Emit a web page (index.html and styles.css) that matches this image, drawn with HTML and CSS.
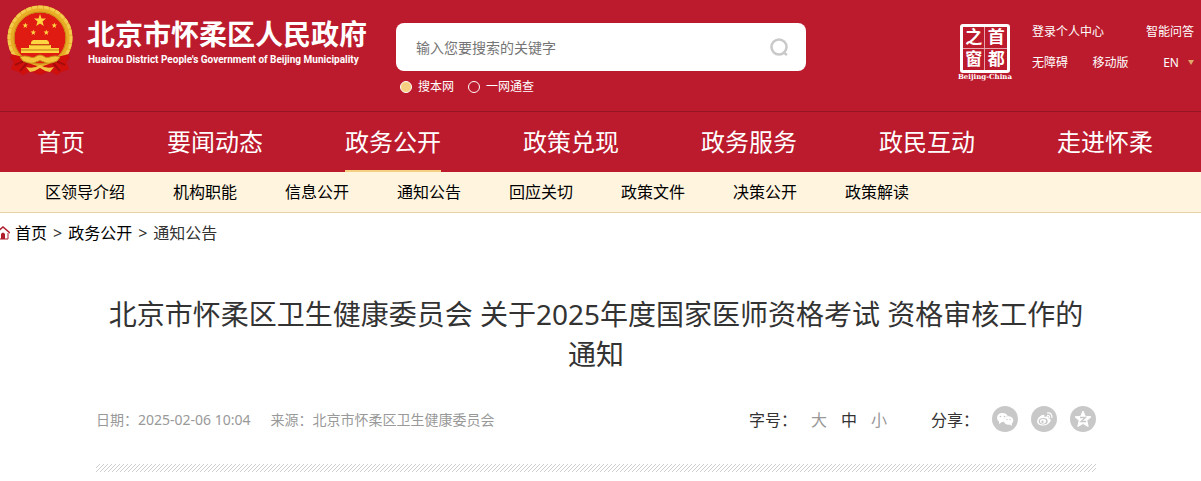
FILE: index.html
```html
<!DOCTYPE html>
<html lang="zh-CN">
<head>
  <meta charset="UTF-8">
  <meta name="viewport" content="width=device-width, initial-scale=1.0">
  <title>通知公告 - 北京市怀柔区人民政府</title>
  <link rel="stylesheet" href="styles.css">
</head>
<body>

  <!-- Header -->
  <header class="header">
    <a href="#" class="brand">
      <svg class="emblem" viewBox="0 0 68 72" aria-hidden="true">
        <path d="M10 46 L4 54 L8 58 L5 65 L13 68 L17 71 L24 67 L34 71 L44 67 L51 71 L55 68 L63 65 L60 58 L64 54 L58 46Z" fill="#c90d0d"/>
        <circle cx="34" cy="34" r="29" fill="#e01b12" stroke="#e8ad25" stroke-width="7"/>
        <circle cx="34" cy="34" r="31" fill="none" stroke="#f3cb4d" stroke-width="3" stroke-dasharray="5 1"/>
        <circle cx="34" cy="34" r="26" fill="none" stroke="#c98516" stroke-width="1"/>
        <path d="M5 50 L17 53 L25 60 L34 63 L43 60 L51 53 L63 50 L60 58 L63 65 L55 68 L51 71 L44 67 L34 70 L24 67 L17 71 L13 68 L5 65 L8 58Z" fill="#cf100d"/>
        <path d="M9 61 L18 57 M14 67 L21 59 M59 61 L50 57 M54 67 L47 59" stroke="#a50c0c" stroke-width="2"/>
        <g fill="#ffd542">
          <path id="star" d="M34 10 L35.500 14.500 L40 14.600 L36.500 17.500 L37.800 22 L34 19.500 L30.200 22 L31.500 17.500 L28 14.600 L32.500 14.500Z"/>
          <use href="#star" transform="translate(4 14) scale(.45)"/>
          <use href="#star" transform="translate(12 21) scale(.45)"/>
          <use href="#star" transform="translate(25 21) scale(.45)"/>
          <use href="#star" transform="translate(33 14) scale(.45)"/>
          <path d="M25 38 L27 36 H41 L43 38 V40 H25Z"/>
          <path d="M23 41 H45 V44 H53 V49 H15 V44 H23Z"/>
        </g>
        <path d="M15 46 H53 M24 41 H44" stroke="#bd7914"/>
        <path d="M14 53 C21 50 25 55 29 53 Q34 49 39 53 C43 55 47 50 54 53 L51 57 Q42 61 38 58 Q34 55 30 58 Q26 61 17 57Z" fill="#f4c33b" stroke="#c78b1b"/>
        <path d="M20 63 Q28 65 34 61 Q40 65 48 63 L44 68 Q38 67 34 64 Q30 67 24 68Z" fill="#f2c344"/>
      </svg>
      <span class="brand-text">
        <strong class="brand-name">北京市怀柔区人民政府</strong>
        <span class="brand-en">Huairou District People's Government of Beijing Municipality</span>
      </span>
    </a>

    <form class="search">
      <div class="search-box">
        <input type="text" class="search-input" placeholder="输入您要搜索的关键字" aria-label="搜索">
        <button type="submit" class="search-btn" aria-label="搜索">
          <svg width="20" height="20" viewBox="0 0 20 20" fill="none" stroke="#c9c9c9" stroke-width="2.500">
            <circle cx="9" cy="10" r="7.500"/>
            <path d="M13 15 L17 18"/>
          </svg>
        </button>
      </div>
      <div class="search-scope">
        <label><input type="radio" name="scope" checked>搜本网</label>
        <label><input type="radio" name="scope">一网通查</label>
      </div>
    </form>

    <div class="tools">
      <a href="#" class="capital">
        <span class="capital-seal"><b>之</b><b>首</b><b>窗</b><b>都</b></span>
        <span class="capital-en">Beijing-China</span>
      </a>
      <div class="tool-links">
        <div class="tool-row">
          <a href="#">登录个人中心</a>
          <a href="#">智能问答</a>
        </div>
        <div class="tool-row">
          <a href="#">无障碍</a>
          <a href="#">移动版</a>
          <a href="#" class="lang">EN</a>
        </div>
      </div>
    </div>
  </header>

  <!-- Navigation -->
  <nav class="nav">
    <a href="#">首页</a>
    <a href="#">要闻动态</a>
    <a href="#" class="active">政务公开</a>
    <a href="#">政策兑现</a>
    <a href="#">政务服务</a>
    <a href="#">政民互动</a>
    <a href="#">走进怀柔</a>
  </nav>
  <nav class="subnav">
    <a href="#">区领导介绍</a>
    <a href="#">机构职能</a>
    <a href="#">信息公开</a>
    <a href="#">通知公告</a>
    <a href="#">回应关切</a>
    <a href="#">政策文件</a>
    <a href="#">决策公开</a>
    <a href="#">政策解读</a>
  </nav>

  <div class="crumbs">
    <svg width="10" height="14" viewBox="0 0 10 14" aria-hidden="true">
      <path d="M-4 7 L3 1 L10 7" fill="none" stroke="#b01c2c" stroke-width="1.500"/>
      <path d="M-2 7 V13 H8 V7" fill="none" stroke="#b01c2c"/>
      <path d="M1 13 V8 Q3 5 5 8 V13Z" fill="#b01c2c"/>
    </svg>
    <a href="#">首页</a>
    <span>&gt;</span>
    <a href="#">政务公开</a>
    <span>&gt;</span>
    <span>通知公告</span>
  </div>

  <!-- Article -->
  <main class="page">
    <article class="article">
      <h1>北京市怀柔区卫生健康委员会 关于2025年度国家医师资格考试 资格审核工作的通知</h1>
      <div class="meta">
        <div class="source">
          <span>日期：2025-02-06 10:04</span>
          <span>来源：北京市怀柔区卫生健康委员会</span>
        </div>
        <div class="font-size">
          <span class="meta-label">字号：</span>
          <button type="button">大</button>
          <button type="button" class="current">中</button>
          <button type="button">小</button>
        </div>
        <div class="share">
          <span class="meta-label">分享：</span>
          <a href="#" aria-label="微信">
            <svg viewBox="0 0 26 26" width="26" height="26">
              <circle cx="13" cy="13" r="13" fill="#c8c8c8"/>
              <path d="M10.500 7 C4 7 4 14 7 15.500 L7 18 L10 16 H12 C11 11 15 10 16 10.500 C15 8 13 7 10.500 7Z" fill="#fff"/>
              <ellipse cx="16.500" cy="14.500" rx="4.800" ry="4.200" fill="#fff"/>
              <path d="M17 18 L20 20 L19.500 17Z" fill="#fff"/>
              <g fill="#c8c8c8"><circle cx="8.500" cy="10.500" r=".8"/><circle cx="12.500" cy="10.500" r=".8"/><circle cx="15" cy="13.500" r=".7"/><circle cx="18" cy="13.500" r=".7"/></g>
            </svg>
          </a>
          <a href="#" aria-label="微博">
            <svg viewBox="0 0 26 26" width="26" height="26">
              <circle cx="13" cy="13" r="13" fill="#c8c8c8"/>
              <path d="M6 15 Q7 11 11 9 Q14 8 13.500 11 Q18 9 17.500 12 Q21 13 19 16 Q16 20 11 19.500 Q6 19 6 15Z" fill="#fff"/>
              <ellipse cx="12.200" cy="15.300" rx="4.500" ry="3.200" fill="#c8c8c8"/>
              <ellipse cx="12" cy="15.300" rx="3" ry="2.400" fill="#fff"/>
              <circle cx="11.500" cy="15.800" r="1.200" fill="#c8c8c8"/>
              <path d="M16 7 Q21 6 21 12 M16 9.500 Q19 9 18.500 12" fill="none" stroke="#fff" stroke-width="1.200"/>
            </svg>
          </a>
          <a href="#" aria-label="QQ空间">
            <svg viewBox="0 0 26 26" width="26" height="26">
              <circle cx="13" cy="13" r="13" fill="#c8c8c8"/>
              <path d="M13 5 L15.300 10.300 L21 10.800 L16.800 14.600 L18.200 20.500 L13 17.500 L7.800 20.500 L9.200 14.600 L5 10.800 L10.700 10.300Z" fill="#fff" stroke="#fff" stroke-linejoin="round"/>
              <path d="M10 11.500 H15.500 L11 15.500 H16" fill="none" stroke="#c8c8c8" stroke-width="1.300"/>
            </svg>
          </a>
        </div>
      </div>
      <div class="divider"></div>
    </article>
  </main>

</body>
</html>
```
FILE: styles.css
```css
* {
  margin: 0;
  padding: 0;
  box-sizing: border-box;
}

body {
  font-family: "Noto Sans", "Noto Sans CJK SC", sans-serif;
  font-size: 16px;
  color: #333;
  background: #fff;
}

a {
  color: inherit;
  text-decoration: none;
}

button,
input {
  font: inherit;
  border: none;
  background: none;
}

button {
  cursor: pointer;
}

/* Header */
.header {
  display: flex;
  align-items: flex-start;
  min-height: 112px;
  padding: 4px 7px 0 6px;
  background: #bc1b2d;
  border-bottom: 1px solid #961524;
  color: #fff;
}

.brand {
  display: flex;
  gap: 13px;
}

.emblem {
  width: 68px;
  height: 72px;
}

.brand-text {
  display: flex;
  flex-direction: column;
  width: 280px;
  padding-top: 14px;
}

.brand-name {
  font-size: 28px;
  line-height: 32px;
}

.brand-en {
  font-family: Roboto, sans-serif;
  font-size: 10px;
  font-weight: 700;
  line-height: 20px;
  padding-left: 1px;
  white-space: nowrap;
}

.search {
  width: 410px;
  margin: 19px 0 0 29px;
}

.search-box {
  display: flex;
  align-items: center;
  height: 48px;
  padding: 0 16px 0 20px;
  background: #fff;
  border-radius: 8px;
}

.search-input {
  flex: 1;
  font-size: 14px;
  color: #333;
  outline: none;
}

.search-input::placeholder {
  color: #757575;
}

.search-btn svg {
  display: block;
}

.search-scope {
  display: flex;
  gap: 14px;
  padding: 6px 4px;
  font-size: 12px;
  line-height: 20px;
}

.search-scope label {
  display: flex;
  align-items: center;
  gap: 6px;
}

.search-scope input {
  appearance: none;
  width: 12px;
  height: 12px;
  border: 1px solid #fff;
  border-radius: 50%;
}

.search-scope input:checked {
  background: #f6cf80;
}

.tools {
  display: flex;
  gap: 20px;
  margin-left: auto;
}

.capital {
  display: flex;
  flex-direction: column;
  align-items: center;
  padding-top: 20px;
}

.capital-seal {
  display: grid;
  grid-template-columns: 1fr 1fr;
  gap: 1px;
  width: 50px;
  height: 49px;
  border: 3px solid #fff;
  border-radius: 3px;
  background: #e6a5ac;
}

.capital-seal b {
  background: #bc1b2d;
  font-family: "Liberation Serif", "Noto Sans CJK SC", serif;
  font-size: 17px;
  line-height: 21px;
  text-align: center;
}

.capital-en {
  font-family: "DejaVu Serif", serif;
  font-size: 7px;
  font-weight: bold;
  line-height: 8px;
}

.tool-links {
  width: 162px;
  padding-top: 12px;
  font-size: 12px;
}

.tool-row {
  display: flex;
  justify-content: space-between;
  line-height: 31px;
}

.lang {
  display: flex;
  align-items: center;
  gap: 9px;
  margin-left: 10px;
}

.lang::after {
  content: "";
  border: 3px solid transparent;
  border-top: 5px solid #e0a868;
  border-bottom: 0;
}

/* Navigation */
.nav {
  display: flex;
  justify-content: space-between;
  padding: 0 48px 0 37px;
  background: #bc1b2d;
  color: #fff;
  font-size: 24px;
  line-height: 56px;
}

.nav a {
  padding-top: 2px;
  border-bottom: 2px solid transparent;
}

.nav .active {
  border-color: #f6cf80;
}

.subnav {
  display: flex;
  gap: 48px;
  padding: 0 45px;
  background: #fff5df;
  border-bottom: 1px solid #e6d3a3;
  color: #000;
  line-height: 40px;
}

.crumbs {
  display: flex;
  align-items: center;
  gap: 6px;
  line-height: 40px;
}

.crumbs svg {
  margin-right: -1px;
}

.crumbs a {
  color: #000;
}

/* Article */
.page {
  padding: 41px 9px 0 0;
}

.article {
  max-width: 1000px;
  margin: 0 auto;
}

.article h1 {
  font-size: 28px;
  font-weight: normal;
  line-height: 40px;
  text-align: center;
}

.meta {
  display: flex;
  align-items: center;
  padding: 32px 0;
}

.source {
  display: flex;
  gap: 20px;
  margin-right: auto;
  font-size: 14px;
  color: #999;
}

.font-size {
  display: flex;
  gap: 14px;
  margin-right: 44px;
}

.font-size button {
  color: #999;
}

.font-size .current {
  color: #333;
}

.share {
  display: flex;
  align-items: center;
  gap: 13px;
}

.share svg {
  display: block;
}

.divider {
  height: 8px;
  background: linear-gradient(135deg, transparent 44%, #d0d0d0 44%, #d0d0d0 56%, transparent 56%);
  background-size: 4px 4px;
}
```
